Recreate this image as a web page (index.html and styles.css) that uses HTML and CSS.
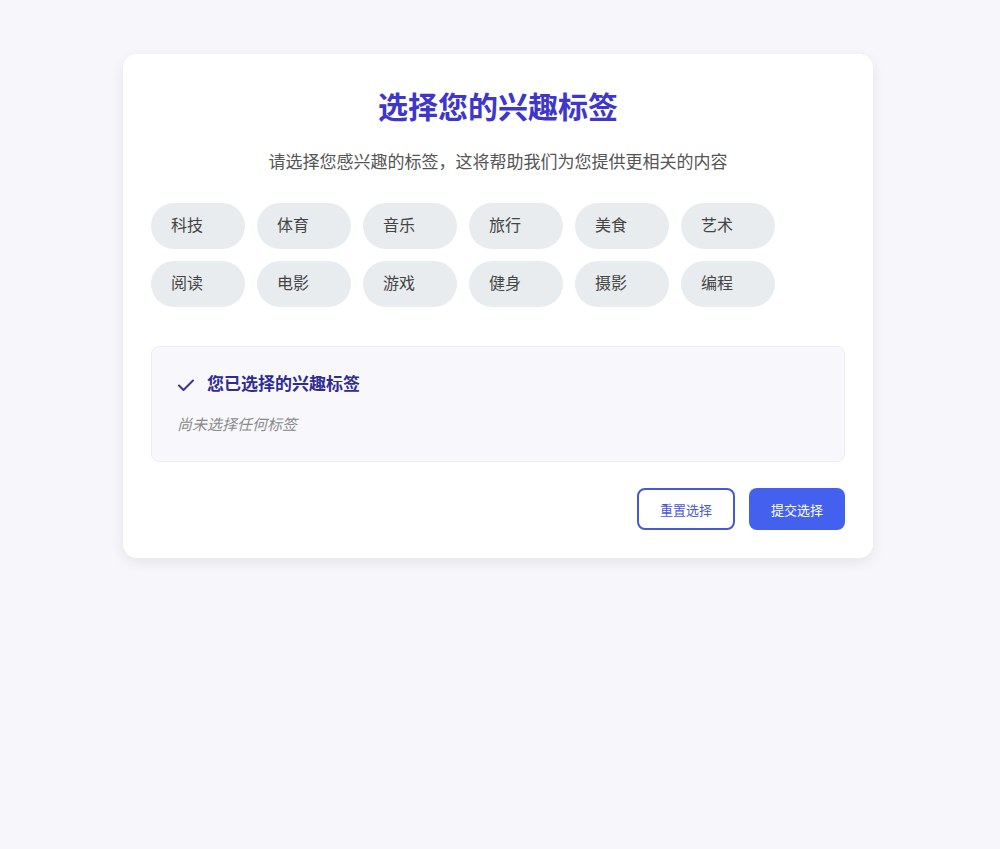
FILE: index.html
```html
<!DOCTYPE html>
<html lang="zh-CN">
<head>
  <meta charset="UTF-8" />
  <meta name="viewport" content="width=device-width, initial-scale=1.0" />
  <title>选择您的兴趣标签</title>
  <link rel="stylesheet" href="styles.css">
</head>
<body>
  <div class="card">
    <h1>选择您的兴趣标签</h1>
    <p class="subtitle">请选择您感兴趣的标签，这将帮助我们为您提供更相关的内容</p>

    <div class="tags">
      <div class="tag">科技</div>
      <div class="tag">体育</div>
      <div class="tag">音乐</div>
      <div class="tag">旅行</div>
      <div class="tag">美食</div>
      <div class="tag">艺术</div>
      <div class="tag">阅读</div>
      <div class="tag">电影</div>
      <div class="tag">游戏</div>
      <div class="tag">健身</div>
      <div class="tag">摄影</div>
      <div class="tag">编程</div>
    </div>

    <div class="selected">
      <h3>
        <svg width="18" height="18" viewBox="0 0 18 18"><path d="M2 9.5l4.5 4.5L16 4.5" fill="none" stroke="#3a3590" stroke-width="2" stroke-linecap="round" stroke-linejoin="round"/></svg>
        您已选择的兴趣标签
      </h3>
      <div class="empty">尚未选择任何标签</div>
    </div>

    <div class="actions">
      <button class="btn-outline">重置选择</button>
      <button class="btn-primary">提交选择</button>
    </div>
  </div>
</body>
</html>
```

FILE: styles.css
```css
body {
  font-family: 'Liberation Sans', 'Noto Sans CJK SC', sans-serif;
  background-color: #f7f7fb;
  margin: 0;
  padding: 54px 4px 54px 0;
}
.card {
  width: 750px;
  box-sizing: border-box;
  margin: 0 auto;
  background: #fff;
  border-radius: 14px;
  padding: 34px 28px 28px;
  box-shadow: 0 4px 14px rgba(0,0,0,0.08);
}
h1 {
  margin: 0;
  text-align: center;
  font-size: 30px;
  line-height: 40px;
  color: #3f37c9;
  font-weight: 700;
}
.subtitle {
  margin: 23px 0 28px;
  text-align: center;
  font-size: 17px;
  line-height: 24px;
  color: #555;
}
.tags {
  display: flex;
  flex-wrap: wrap;
  gap: 12px;
}
.tag {
  width: 94px;
  height: 46px;
  box-sizing: border-box;
  padding: 0 20px;
  line-height: 46px;
  border-radius: 23px;
  background: #e9ecef;
  color: #444;
  font-size: 16px;
}
.selected {
  margin-top: 39px;
  background: #f8f8fc;
  border: 1px solid #eceef2;
  border-radius: 8px;
  padding: 26px 25px 26px;
}
.selected h3 {
  margin: 0 0 18px;
  display: flex;
  align-items: center;
  gap: 12px;
  font-size: 17px;
  line-height: 24px;
  color: #2f2b94;
  font-weight: 700;
}
.empty {
  font-style: italic;
  color: #8a8a8a;
  font-size: 15px;
  line-height: 20px;
}
.actions {
  display: flex;
  justify-content: flex-end;
  gap: 14px;
  margin-top: 26px;
}
button {
  font-family: inherit;
  font-size: 13px;
  height: 42px;
  border-radius: 8px;
  cursor: pointer;
}
.btn-outline {
  width: 98px;
  background: #fff;
  border: 2px solid #4a57d4;
  color: #4a57d4;
}
.btn-primary {
  width: 96px;
  background: #4361ee;
  border: none;
  color: #fff;
}
```
